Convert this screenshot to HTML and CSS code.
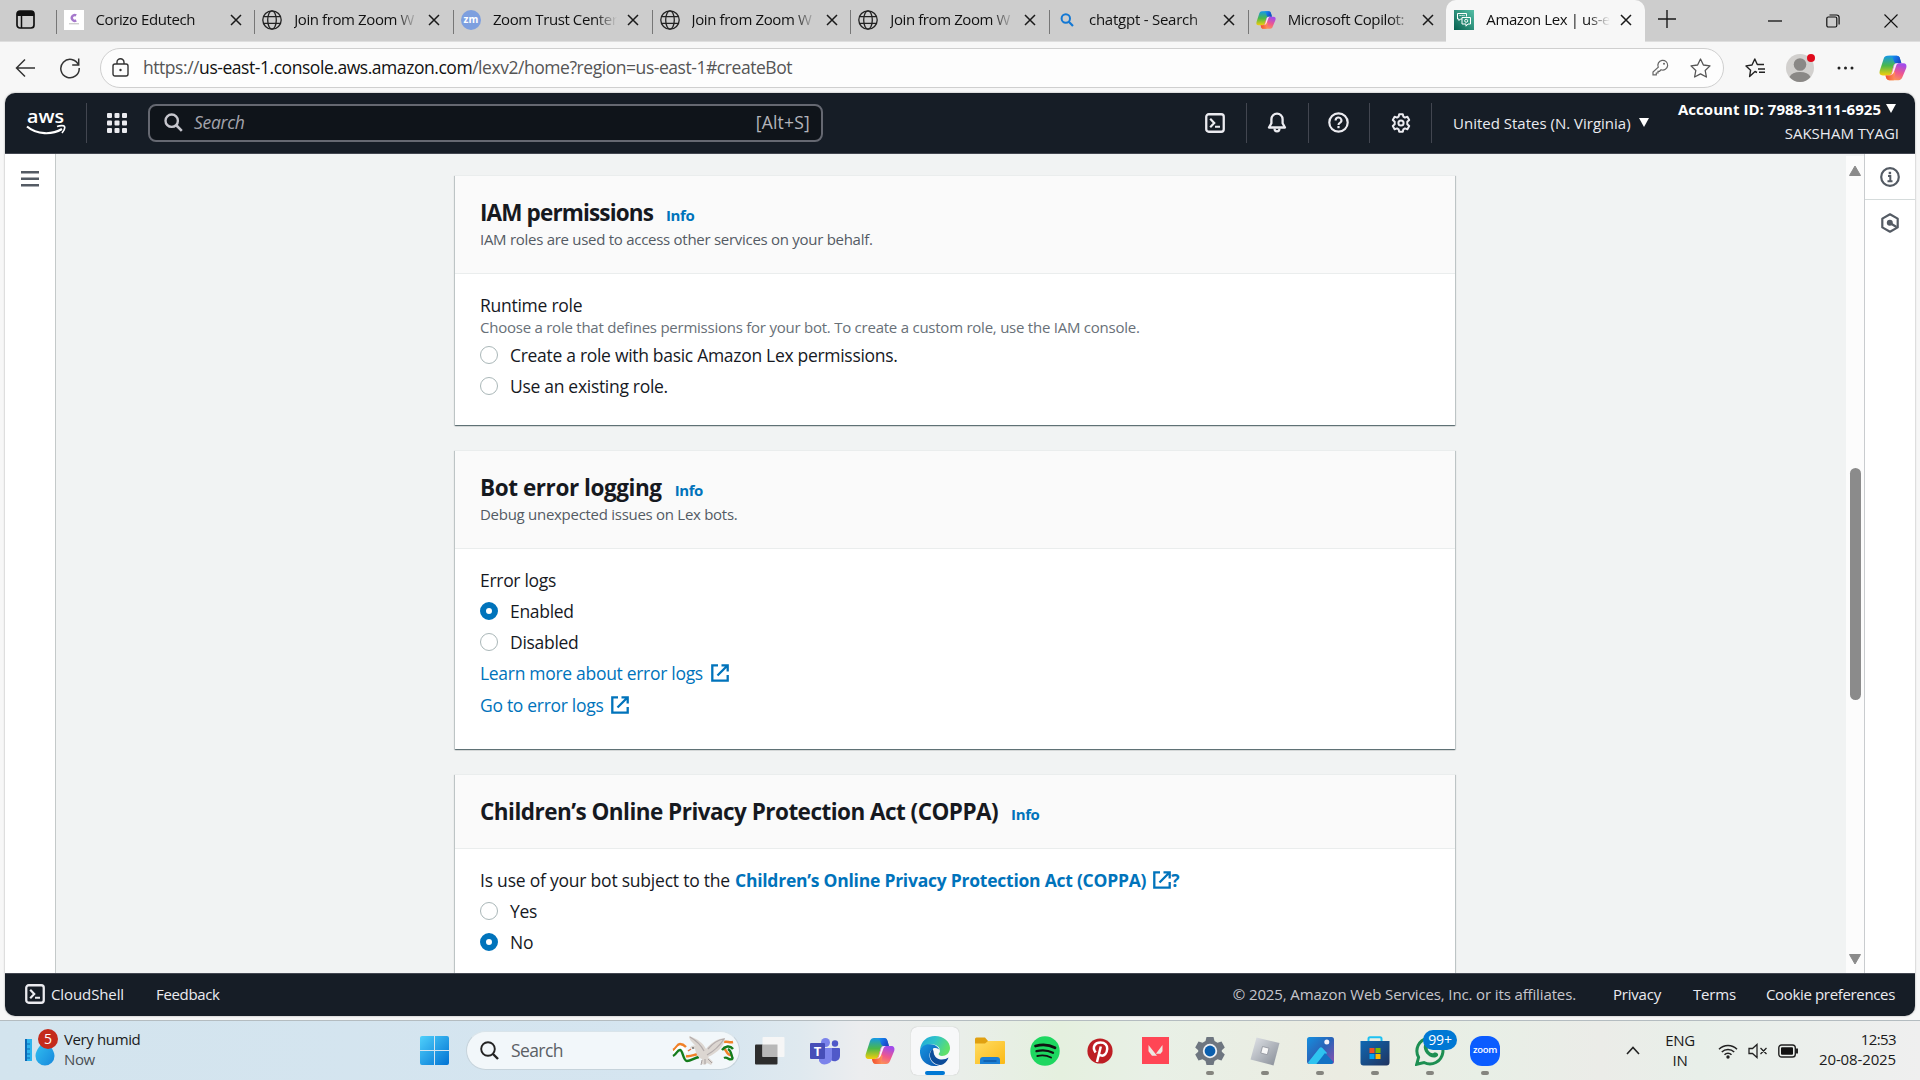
FILE: index.html
```html
<!DOCTYPE html>
<html lang="en">
<head>
<meta charset="utf-8">
<title>Amazon Lex | us-east-1</title>
<link rel="stylesheet" href="styles.css">
</head>
<body>
<svg class="sprite" width="0" height="0" aria-hidden="true">
  <defs>
    <linearGradient id="cpBlue" x1="0" y1="0" x2="1" y2=".3"><stop offset="0" stop-color="#22b6ee"/><stop offset=".55" stop-color="#1479e8"/><stop offset="1" stop-color="#1b49c9"/></linearGradient>
    <linearGradient id="cpLeft" x1="0" y1="0" x2="0" y2="1"><stop offset="0" stop-color="#1598e6"/><stop offset=".5" stop-color="#4bb84a"/><stop offset="1" stop-color="#f5ce0a"/></linearGradient>
    <linearGradient id="cpRight" x1=".6" y1="0" x2=".2" y2="1"><stop offset="0" stop-color="#a24bea"/><stop offset=".5" stop-color="#f0588c"/><stop offset="1" stop-color="#ffa04a"/></linearGradient>
    <linearGradient id="cpBottom" x1="0" y1="0" x2="1" y2="0"><stop offset="0" stop-color="#f0502d"/><stop offset="1" stop-color="#ff8f5e"/></linearGradient>
    <linearGradient id="edgeTop" x1="0" y1="0" x2="1" y2=".4"><stop offset="0" stop-color="#1fa5dc"/><stop offset=".5" stop-color="#2fc3c9"/><stop offset="1" stop-color="#5fe06a"/></linearGradient>
    <linearGradient id="edgeLow" x1="0" y1="0" x2="1" y2="1"><stop offset="0" stop-color="#1795e0"/><stop offset="1" stop-color="#0a55b0"/></linearGradient>
    <linearGradient id="winG" x1="0" y1="0" x2="1" y2="1"><stop offset="0" stop-color="#4fd0fb"/><stop offset="1" stop-color="#0072d3"/></linearGradient>
    <linearGradient id="dropG" x1="0" y1="0" x2="1" y2="1"><stop offset="0" stop-color="#35c5f2"/><stop offset="1" stop-color="#1687dc"/></linearGradient>
    <linearGradient id="folderG" x1="0" y1="0" x2="1" y2="1"><stop offset="0" stop-color="#ffdc62"/><stop offset="1" stop-color="#fbb916"/></linearGradient>
    <linearGradient id="robloxG" x1="0" y1="0" x2="1" y2="1"><stop offset="0" stop-color="#e2e5e9"/><stop offset="1" stop-color="#858b95"/></linearGradient>
    <linearGradient id="photoG" x1="0" y1="0" x2="1" y2="1"><stop offset="0" stop-color="#1590df"/><stop offset=".5" stop-color="#2a63b8"/><stop offset="1" stop-color="#8f4fae"/></linearGradient>
    <linearGradient id="storeG" x1="0" y1="0" x2="1" y2="1"><stop offset="0" stop-color="#0e68b4"/><stop offset="1" stop-color="#21345f"/></linearGradient>
    <linearGradient id="lexG" x1="0" y1="1" x2="1" y2="0"><stop offset="0" stop-color="#055f4e"/><stop offset="1" stop-color="#56c0a7"/></linearGradient>
    <symbol id="x" viewBox="0 0 12 12"><path d="M1 1l10 10M11 1L1 11" stroke="#1a1a1a" stroke-width="1.5" fill="none"/></symbol>
    <symbol id="globe" viewBox="0 0 20 20"><g fill="none" stroke="#222" stroke-width="1.3"><circle cx="10" cy="10" r="9.2"/><ellipse cx="10" cy="10" rx="4.3" ry="9.2"/><path d="M1.6 6.6h16.8M1.6 13.4h16.8"/></g></symbol>
    <symbol id="copilot" viewBox="0 0 30 28">
      <path d="M9 1h10c2 0 3 1 3.500 3l1.500 5h-5c-2 0-3 1-3.500 3l-2 7c-.7 2-2 3-4 3H4c-3 0-4-2-3.200-5L5 4c.8-2 2-3 4-3z" fill="url(#cpLeft)"/>
      <path d="M9 1h10c2 0 3 1 3.500 3l1.500 5h-5c-1.600 0-2.500-.6-3-2.200L15 4c-.5-2-2-3-6-3z" fill="url(#cpBlue)"/>
      <path d="M21 27H11c-2 0-3-1-3.500-3L7 22h3c2 0 3-1 3.500-3l2-7c.7-2 2-3 4-3H26c3 0 4 2 3.200 5L25 24c-.8 2-2 3-4 3z" fill="url(#cpRight)"/>
      <path d="M15 27h-4c-2 0-3-1-3.500-3L7 22h3c2 0 3-1 3.500-3l1-3.500 3 3.500-1.500 6c-.2 1-.3 1.600 0 2z" fill="url(#cpBottom)"/>
      <path d="M14 19l2-7c.6-2 1.600-3 3.500-3h1.500c-1.600.5-2.300 1.500-2.900 3.400L16.500 17c-.8 3-2.500 4.800-5 5 1.500-.6 2.100-1.500 2.500-3z" fill="#fff" opacity=".9"/>
    </symbol>
    <symbol id="shell" viewBox="0 0 20 20"><rect x="1.250" y="1.250" width="17.500" height="17.500" rx="2.500" fill="none" stroke="#ebebf0" stroke-width="2.300"/><path d="M5.200 5.800l4 4.200-4 4.200" fill="none" stroke="#ebebf0" stroke-width="2.200"/><path d="M10 13.800h5" stroke="#ebebf0" stroke-width="2"/></symbol>
    <symbol id="ext" viewBox="0 0 18 18"><g fill="none" stroke="#0073bb" stroke-width="2.300"><path d="M7 1.300H1.300v15.400h15.400V11"/><path d="M10.500 1.300h6.200v6.200M16.200 1.800L6.500 11.500"/></g></symbol>
  </defs>
</svg>

<div class="desktop">
  <header class="tabstrip">
    <div class="workspace"><svg width="19" height="19" viewBox="0 0 19 19"><rect x="1" y="1" width="17" height="17" rx="3" fill="none" stroke="#111" stroke-width="1.700"/><path d="M1 4a3 3 0 0 1 3-3h11a3 3 0 0 1 3 3v2H1z" fill="#111"/><path d="M5.500 6v12" stroke="#111" stroke-width="1.500"/></svg></div>
    <div class="tab"><svg class="fav" viewBox="0 0 20 20"><rect width="20" height="20" fill="#fff"/><path d="M12.200 5.400a2.900 2.900 0 1 0 0 5" fill="none" stroke="#a678cc" stroke-width="2.400"/><path d="M5 13.800h10" stroke="#bbb" stroke-width="1"/></svg><span class="tab-title">Corizo Edutech</span><svg class="close"><use href="#x"/></svg></div>
    <div class="tab"><svg class="fav"><use href="#globe"/></svg><span class="tab-title">Join from Zoom W</span><svg class="close"><use href="#x"/></svg></div>
    <div class="tab"><span class="fav zm">zm</span><span class="tab-title">Zoom Trust Center</span><svg class="close"><use href="#x"/></svg></div>
    <div class="tab"><svg class="fav"><use href="#globe"/></svg><span class="tab-title">Join from Zoom W</span><svg class="close"><use href="#x"/></svg></div>
    <div class="tab"><svg class="fav"><use href="#globe"/></svg><span class="tab-title">Join from Zoom W</span><svg class="close"><use href="#x"/></svg></div>
    <div class="tab"><svg class="fav" viewBox="0 0 20 20"><circle cx="8.800" cy="8.500" r="4.200" fill="none" stroke="#1378d4" stroke-width="2"/><path d="M11.800 11.800l4.200 4.200" stroke="#1378d4" stroke-width="2.200"/></svg><span class="tab-title chat">chatgpt - Search</span><svg class="close"><use href="#x"/></svg></div>
    <div class="tab"><svg class="fav"><use href="#copilot"/></svg><span class="tab-title">Microsoft Copilot:</span><svg class="close"><use href="#x"/></svg></div>
    <div class="tab active"><svg class="fav" viewBox="0 0 20 20"><rect width="20" height="20" fill="url(#lexG)"/><g fill="none" stroke="#fff" stroke-width="1"><path d="M8 9H6.500L5 10.500V9H3.500V3.500h9v3"/><path d="M8 7.500h8.500V14H14l-2 2.200V14H8z"/><circle cx="12.200" cy="10.800" r="1.500"/><path d="M5.500 5.500h5" stroke-dasharray="1.200 .8"/></g></svg><span class="tab-title">Amazon Lex | us-e</span><svg class="close"><use href="#x"/></svg></div>
    <svg class="newtab" width="18" height="18" viewBox="0 0 18 18"><path d="M9 0v18M0 9h18" stroke="#1a1a1a" stroke-width="1.400"/></svg>
    <div class="wincontrols">
      <svg width="14" height="14" viewBox="0 0 14 14"><path d="M0 7h14" stroke="#111" stroke-width="1.300"/></svg>
      <svg width="14" height="14" viewBox="0 0 14 14"><g fill="none" stroke="#111" stroke-width="1.200"><rect x=".8" y="3" width="10" height="10" rx="1.500"/><path d="M3.500 1h7a2.600 2.600 0 0 1 2.600 2.600v7"/></g></svg>
      <svg width="14" height="14" viewBox="0 0 14 14"><path d="M.5.5l13 13M13.500.5l-13 13" stroke="#111" stroke-width="1.100"/></svg>
    </div>
  </header>

  <div class="toolbar">
    <svg class="back" width="21" height="20" viewBox="0 0 21 20"><path d="M20 10H1.500M10 1.500L1.500 10l8.500 8.500" fill="none" stroke="#333" stroke-width="1.500"/></svg>
    <svg class="reload" width="22" height="22" viewBox="0 0 22 22"><path d="M19.500 8A9.200 9.200 0 1 0 20.200 11" fill="none" stroke="#333" stroke-width="1.500"/><path d="M19.700 1.500V8h-6.500" fill="none" stroke="#333" stroke-width="1.500"/></svg>
    <div class="address">
      <svg width="17" height="19" viewBox="0 0 17 19"><g fill="none" stroke="#333" stroke-width="1.400"><rect x="1" y="6" width="15" height="12" rx="2"/><path d="M5 6V4.200a3.500 3.500 0 0 1 7 0V6"/></g><circle cx="8.500" cy="12" r="1.200" fill="#333"/></svg>
      <span class="url">https://<b>us-east-1.console.aws.amazon.com</b>/lexv2/home?region=us-east-1#createBot</span>
      <svg class="key" width="17" height="17" viewBox="0 0 17 17"><path d="M6.300 8.200a4.900 4.900 0 1 1 2.800 2.600L7.500 12.300H6v1.700H4.300v1.900H1v-2.800z" fill="none" stroke="#666" stroke-width="1.200"/><circle cx="12" cy="4.800" r="1" fill="#666"/></svg>
      <svg width="21" height="20" viewBox="0 0 21 20"><path d="M10.500 1l2.900 6 6.600.9-4.800 4.600 1.200 6.500-5.900-3.100L4.600 19l1.200-6.500L1 7.900 7.600 7z" fill="none" stroke="#555" stroke-width="1.300" stroke-linejoin="round"/></svg>
    </div>
    <svg class="favs" width="21" height="20" viewBox="0 0 21 20"><path d="M12 14.500l-2-1L4.600 18.500l1-6.300L1 7.900l6-.9 2.800-6 2.500 5.500H19M13 11h7M14 14.200h6" fill="none" stroke="#222" stroke-width="1.400" stroke-linejoin="round"/></svg>
    <span class="avatar"><svg width="28" height="28" viewBox="0 0 28 28"><circle cx="14" cy="14" r="14" fill="#d2d0ce"/><circle cx="14" cy="10.500" r="6.300" fill="#8a8886"/><path d="M3.500 23a11 7 0 0 1 21 0A14 14 0 0 1 14 28 14 14 0 0 1 3.500 23z" fill="#8a8886"/></svg><i class="dot"></i></span>
    <svg class="more" width="17" height="4" viewBox="0 0 17 4"><g fill="#222"><circle cx="2" cy="2" r="1.500"/><circle cx="8.500" cy="2" r="1.500"/><circle cx="15" cy="2" r="1.500"/></g></svg>
    <svg class="cp" width="28" height="28"><use href="#copilot"/></svg>
  </div>

  <div class="page">
    <nav class="awsnav">
      <svg class="logo" width="40" height="26" viewBox="0 0 40 26"><text x="1" y="13" textLength="37" lengthAdjust="spacingAndGlyphs" class="logo-text">aws</text><path d="M1 16.500c10 8.500 25 8.500 35 2.500" fill="none" stroke="#fff" stroke-width="2.200"/><path d="M31 16.500c3-1 7-1.200 7.500 0s-.8 4.500-2.500 6.500" fill="none" stroke="#fff" stroke-width="1.700"/></svg>
      <i class="vr"></i>
      <svg class="apps" width="20" height="20" viewBox="0 0 20 20"><g fill="#ebebf0"><rect width="5" height="5" rx="1"/><rect x="7.500" width="5" height="5" rx="1"/><rect x="15" width="5" height="5" rx="1"/><rect y="7.500" width="5" height="5" rx="1"/><rect x="7.500" y="7.500" width="5" height="5" rx="1"/><rect x="15" y="7.500" width="5" height="5" rx="1"/><rect y="15" width="5" height="5" rx="1"/><rect x="7.500" y="15" width="5" height="5" rx="1"/><rect x="15" y="15" width="5" height="5" rx="1"/></g></svg>
      <div class="search"><svg width="19" height="19" viewBox="0 0 19 19"><circle cx="7.700" cy="7.700" r="6.200" fill="none" stroke="#c6c6cd" stroke-width="2.400"/><path d="M12 12l5.800 5.800" stroke="#c6c6cd" stroke-width="2.600"/></svg><span class="ph">Search</span><span class="kbd">[Alt+S]</span></div>
      <div class="navicons">
        <span><svg width="20" height="20"><use href="#shell"/></svg></span>
        <span><svg width="20" height="21" viewBox="0 0 20 21"><path d="M10 1.600a5.600 5.600 0 0 0-5.600 5.600v4L2 15.500h16l-2.400-4.300v-4A5.600 5.600 0 0 0 10 1.600z" fill="none" stroke="#ebebf0" stroke-width="2.300" stroke-linejoin="round"/><path d="M7.500 16.500a2.500 2.800 0 0 0 5 0" fill="none" stroke="#ebebf0" stroke-width="2.200"/></svg></span>
        <span><svg width="21" height="21" viewBox="0 0 21 21"><circle cx="10.500" cy="10.500" r="9.200" fill="none" stroke="#ebebf0" stroke-width="2.200"/><path d="M7.600 8.400a2.900 2.900 0 1 1 4.300 2.500c-1 .6-1.400 1-1.400 2.100" fill="none" stroke="#ebebf0" stroke-width="2.100"/><rect x="9.400" y="14" width="2.200" height="2.200" fill="#ebebf0"/></svg></span>
        <span><svg width="20" height="20" viewBox="0 0 20 20"><path d="M8.200 1.200h3.600l.6 2.500 1.500.9 2.500-.8 1.800 3.100-1.900 1.800v2.600l1.900 1.800-1.800 3.100-2.500-.8-1.500.9-.6 2.500H8.200l-.6-2.500-1.500-.9-2.500.8-1.800-3.100 1.900-1.800V8.700L1.800 6.900l1.800-3.100 2.500.8 1.500-.9z" fill="none" stroke="#ebebf0" stroke-width="2" stroke-linejoin="round"/><circle cx="10" cy="10" r="2.600" fill="none" stroke="#ebebf0" stroke-width="2"/></svg></span>
      </div>
      <div class="region"><span>United States (N. Virginia)</span><i class="caret"></i></div>
      <div class="account"><div class="acct-id"><b>Account ID: 7988-3111-6925</b><i class="caret"></i></div><div class="acct-name">SAKSHAM TYAGI</div></div>
    </nav>

    <div class="work">
      <aside class="rail left"><svg width="18" height="16" viewBox="0 0 18 16"><path d="M0 1.300h18M0 7.800h18M0 14.300h18" stroke="#545b64" stroke-width="2.400"/></svg></aside>
      <main class="content">
        <section class="card">
          <div class="card-head"><h2><span class="h-iam">IAM permissions</span><a class="info">Info</a></h2><p>IAM roles are used to access other services on your behalf.</p></div>
          <div class="card-body">
            <div class="label">Runtime role</div>
            <div class="hint">Choose a role that defines permissions for your bot. To create a custom role, use the IAM console.</div>
            <div class="row"><i class="radio"></i><span>Create a role with basic Amazon Lex permissions.</span></div>
            <div class="row"><i class="radio"></i><span>Use an existing role.</span></div>
          </div>
        </section>
        <section class="card">
          <div class="card-head"><h2><span class="h-bot">Bot error logging</span><a class="info">Info</a></h2><p>Debug unexpected issues on Lex bots.</p></div>
          <div class="card-body logs">
            <div class="row">Error logs</div>
            <div class="row"><i class="radio on"></i><span>Enabled</span></div>
            <div class="row"><i class="radio"></i><span>Disabled</span></div>
            <a class="row link">Learn more about error logs<svg width="18" height="18"><use href="#ext"/></svg></a>
            <a class="row link">Go to error logs<svg width="18" height="18"><use href="#ext"/></svg></a>
          </div>
        </section>
        <section class="card">
          <div class="card-head short"><h2><span class="h-coppa">Children’s Online Privacy Protection Act (COPPA)</span><a class="info">Info</a></h2></div>
          <div class="card-body logs">
            <div class="row question"><span class="q">Is use of your bot subject to the</span><a class="qlink">Children’s Online Privacy Protection Act (COPPA)</a><svg width="18" height="18"><use href="#ext"/></svg><b class="qm">?</b></div>
            <div class="row"><i class="radio"></i><span>Yes</span></div>
            <div class="row"><i class="radio on"></i><span>No</span></div>
          </div>
        </section>
      </main>
      <div class="scrollbar"><svg width="12" height="11" viewBox="0 0 12 11"><path d="M6 1l5.500 9.500H.5z" fill="#8b8b8b" stroke="#8b8b8b" stroke-linejoin="round"/></svg><i class="thumb"></i><svg width="12" height="11" viewBox="0 0 12 11"><path d="M6 10L11.500.5H.5z" fill="#8b8b8b" stroke="#8b8b8b" stroke-linejoin="round"/></svg></div>
      <aside class="rail right">
        <span><svg width="20" height="20" viewBox="0 0 20 20"><circle cx="10" cy="10" r="8.800" fill="none" stroke="#545b64" stroke-width="2.200"/><path d="M8 9h2.300v5M7.500 14.200h5" fill="none" stroke="#545b64" stroke-width="2"/><rect x="8.700" y="4.800" width="2.400" height="2.400" fill="#545b64"/></svg></span>
        <span><svg width="20" height="20" viewBox="0 0 20 20"><path d="M10 1.300l7.700 4.300v8.800L10 18.700l-7.700-4.300V5.600z" fill="none" stroke="#545b64" stroke-width="2.200" stroke-linejoin="round"/><circle cx="9.800" cy="9.800" r="3" fill="#545b64"/><path d="M10 10l6.500 4" stroke="#545b64" stroke-width="2.200"/></svg></span>
      </aside>
    </div>

    <footer class="awsfoot">
      <svg width="20" height="20"><use href="#shell"/></svg><span class="f1">CloudShell</span><span class="f2">Feedback</span>
      <span class="copy">© 2025, Amazon Web Services, Inc. or its affiliates.</span><span class="f3">Privacy</span><span class="f3">Terms</span><span class="f4">Cookie preferences</span>
    </footer>
  </div>

  <div class="taskbar">
    <div class="widgets">
      <div class="weather"><svg width="33" height="32" viewBox="0 0 33 32"><rect x="0" y="0" width="7" height="22" fill="#2cb4ee"/><rect width="2" height="22" fill="#0d69b5"/><path d="M2 5h3M2 10h3M2 15h3M2 19h3" stroke="#0d69b5" stroke-width="1"/><path d="M20 0c4 6 9.500 11 9.500 17a9.500 9.500 0 0 1-19 0C10.500 11 16 6 20 0z" fill="url(#dropG)"/></svg><span class="wbadge">5</span></div>
      <div class="wtext"><span>Very humid</span><span class="now">Now</span></div>
    </div>
    <svg class="start" width="29" height="29" viewBox="0 0 29 29"><g fill="url(#winG)"><path d="M2 0h12v14H0V2a2 2 0 0 1 2-2zM15 0h12a2 2 0 0 1 2 2v12H15zM0 15h14v14H2a2 2 0 0 1-2-2zM15 15h14v12a2 2 0 0 1-2 2H15z"/></g></svg>
    <div class="tsearch"><svg width="19" height="19" viewBox="0 0 19 19"><circle cx="8" cy="8" r="6.800" fill="none" stroke="#222" stroke-width="1.900"/><path d="M13 13l5 5" stroke="#222" stroke-width="2.400"/></svg><span>Search</span>
      <svg class="dove" width="63" height="30" viewBox="0 0 63 30"><g fill="none" stroke-width="2.400"><path d="M1 14c3-1 4-6 7-6s4 1 6 3" stroke="#f08128"/><path d="M1 17c4-2 4-6 7-6s5 4 7 6" stroke="#fff"/><path d="M1 20c4-2 4-6 7-6s3 11 7 11 7-3 12-4" stroke="#147c1c"/><path d="M14 20c4 1 7-1 12-2" stroke="#f08128"/><path d="M52 6c4-1 5 1 9 0M51 12c3 0 4 8 8 7" stroke="#f08128"/><path d="M52 9c4-1 5 1 8 1" stroke="#fff"/><path d="M50 14c3-4 8-5 11-1M52 22c4-2 4 3 9 1M56 13c4 2 3 7 5 10" stroke="#147c1c"/></g><path d="M18 12c2-3 5-3 7-1C21 7 17 4 17 0c9 3 14 7 17 13 5-6 10-10 19-11-1 9-8 15-17 19l5 5-2 3-4-2-2 2-3-1v-5c-5-2-6-6-7-10z" fill="#dcd6d1"/><path d="M18 1c7 4 11 8 14 14M36 13c5-6 9-9 16-10-5 8-10 12-17 16" fill="none" stroke="#b3acac" stroke-width="1.200"/><path d="M30 24l-1 5M33 23v5M36 23l4 4" stroke="#a7a0a0"/><circle cx="21" cy="12" r=".8" fill="#222"/><path d="M16 15l3-2" stroke="#e37446" stroke-width="1.500"/></svg>
    </div>
    <div class="apps-row">
      <span class="app"><svg width="30" height="30" viewBox="0 0 30 30"><rect x="0" y="8.500" width="22.500" height="20" rx="1" fill="#2d2d2d"/><rect x="7.500" y="1" width="22" height="20" rx="1" fill="#f6f6f6"/><path d="M7.500 8.500h15V21h-15z" fill="#b8b8b8"/></svg></span>
      <span class="app"><svg width="30" height="30" viewBox="0 0 30 30"><circle cx="15.500" cy="6.500" r="4.500" fill="#7b83eb"/><circle cx="25" cy="7.500" r="3.200" fill="#5059c9"/><path d="M21 12h8a1 1 0 0 1 1 1v7a5.500 5.500 0 0 1-9 4z" fill="#5059c9"/><path d="M9 12h13v9a7 7 0 0 1-13 4z" fill="#7b83eb"/><rect y="7" width="15" height="16" rx="1" fill="#464eb8"/><text x="7.500" y="19.500" text-anchor="middle" class="teams-t">T</text></svg></span>
      <span class="app"><svg width="30" height="28"><use href="#copilot"/></svg></span>
      <span class="app current"><svg width="30" height="30" viewBox="0 0 30 30"><path d="M0 14C1 5 7 0 15 0c9 0 15 6 15 12 0 5-4 8-8 8-3 0-4-1.500-3.500-2.500 1-1 1.300-2 1.300-3.500 0-4-5-6-9-5.500C5 9 1.500 11 0 14z" fill="url(#edgeTop)"/><path d="M0 14c2-4.500 6-6 10-5.800 5 0 9 3 9.500 6.300C17 11 10 12 9.500 19c-.3 5 4 10 10 10.500C10 32-1 26 0 14z" fill="url(#edgeLow)"/><path d="M12.500 13C9 16 9 22 13 26c3 3 8 4 10.500 2 3-2 4.500-4.500 5-6.500-4 3-13 3-14-3-.5-2.500-.5-4-2-5.500z" fill="#0c4c9a"/><path d="M13 12.500c2.500-1 6 0 6.800 2.500-.2 1.500-.8 2.200-1.500 3 .5 1.700 2.200 2 3.700 2-3.500 1.500-7 .5-8-2-.7-2 0-3.500-1-5.500z" fill="#f8f8f8"/></svg></span>
      <span class="app"><svg width="30" height="30" viewBox="0 0 30 30"><path d="M0 3a1.500 1.500 0 0 1 1.500-1.500H10L13 5v3H0z" fill="#e0a010"/><path d="M0 7.500h10L13 5h16a1 1 0 0 1 1 1v21a1 1 0 0 1-1 1H0z" fill="url(#folderG)"/><path d="M5 28v-4a3 3 0 0 1 3-3h14a3 3 0 0 1 3 3v4z" fill="#1b7fd4"/><path d="M8.500 25h13" stroke="#0b4f9a" stroke-width="1.200"/></svg></span>
      <span class="app"><svg width="30" height="30" viewBox="0 0 30 30"><circle cx="15" cy="15" r="14.700" fill="#1ed760"/><g fill="none" stroke="#111" stroke-linecap="round"><path d="M5.500 10c7-2 14-1.200 19.500 1.800" stroke-width="2.700"/><path d="M6.500 15.200c6-1.600 11.500-1 16.500 1.600" stroke-width="2.300"/><path d="M7.300 20c5-1.200 9.500-.7 13.700 1.500" stroke-width="1.900"/></g></svg></span>
      <span class="app"><svg width="26" height="26" viewBox="0 0 26 26"><circle cx="13" cy="13" r="12.600" fill="#bd1e24"/><path d="M8.600 14.500C4.500 8.500 8.500 4.500 13.500 4.500c4.500 0 7 2.800 6.700 6.500-.3 4.500-3 7-5.700 6.600-1.700-.2-2.500-1.200-2.500-1.200M13.800 8.500l-3.800 15.500" fill="none" stroke="#fff" stroke-width="2.500"/></svg></span>
      <span class="app"><svg width="27" height="27" viewBox="0 0 27 27"><rect width="27" height="27" fill="#ff4655"/><path d="M6.500 8l8.500 10.800h-5L6.500 14.300zM20.500 8v6.300l-2 2.400h-4.600z" fill="#ece8e1"/></svg></span>
      <span class="app run"><svg width="30" height="30" viewBox="0 0 30 30"><path d="M11.500 1h7l1 4 3 1.700 4-1.200 3.300 6-3 2.800v1.400l3 2.800-3.300 6-4-1.200-3 1.700-1 4h-7l-1-4-3-1.700-4 1.200-3.300-6 3-2.800v-1.400l-3-2.800 3.300-6 4 1.200 3-1.700z" fill="#6e7680"/><circle cx="15" cy="15" r="7.200" fill="#eef1f4"/><circle cx="15" cy="15" r="5.400" fill="#0b5fae"/></svg></span>
      <span class="app run"><svg width="30" height="30" viewBox="0 0 30 30"><path d="M6.500 1.500L29.500 7l-6 22.500L.5 23.500z" fill="url(#robloxG)"/><path d="M12.500 10.500l6.500 1.700-1.700 6.500-6.500-1.700z" fill="#f7f7f7" stroke="#8d9199" stroke-width=".8"/></svg></span>
      <span class="app run"><svg width="27" height="27" viewBox="0 0 27 27"><rect width="27" height="27" rx="2.500" fill="url(#photoG)"/><path d="M1 25.500L12.500 11q1.500-1.700 3 0L20 16 9.500 27H2.500z" fill="#2ec3f0"/><path d="M9.500 27l8.500-11 8.500 9q-.8 2-2.500 2z" fill="#1372c4"/><circle cx="19.800" cy="5" r="2.500" fill="#f7f3fa"/></svg></span>
      <span class="app run"><svg width="30" height="30" viewBox="0 0 30 30"><path d="M8.500 7V2.800c0-1 .5-1.500 1.500-1.500h10c1 0 1.500.5 1.500 1.500V7" fill="none" stroke="#1ec1f2" stroke-width="2"/><path d="M.5 5h29v21.500a3 3 0 0 1-3 3h-23a3 3 0 0 1-3-3z" fill="url(#storeG)"/><path d="M9.500 12h5v5h-5z" fill="#f25022"/><path d="M15.500 12h5v5h-5z" fill="#7fba00"/><path d="M9.500 18h5v5h-5z" fill="#00a4ef"/><path d="M15.500 18h5v5h-5z" fill="#ffb900"/></svg></span>
      <span class="app run"><svg width="30" height="30" viewBox="0 0 30 30"><path d="M1.700 28.300l1.900-7A13 13 0 1 1 9 26.500z" fill="none" stroke="#1d8f52" stroke-width="3"/><path d="M9 9c3-4 5 1 4 3-1.500 1.500 3.500 6.500 5.500 5 1.500-1.500 6.500.5 4 3.300C17 25 7 16 9 9z" fill="#1d8f52"/></svg><span class="wa-badge">99+</span></span>
      <span class="app run"><span class="zoom">zoom</span></span>
    </div>
    <div class="tray">
      <svg class="chev" width="14" height="9" viewBox="0 0 14 9"><path d="M1 8l6-6.500L13 8" fill="none" stroke="#222" stroke-width="1.600"/></svg>
      <div class="lang"><span>ENG</span><span>IN</span></div>
      <svg class="wifi" width="20" height="16" viewBox="0 0 20 16"><g fill="none" stroke="#222" stroke-width="1.500"><path d="M1 6.200a12.700 12.700 0 0 1 18 0M3.800 9a8.700 8.700 0 0 1 12.400 0M6.500 11.800a4.900 4.900 0 0 1 7 0"/></g><circle cx="10" cy="14" r="1.700" fill="#222"/></svg>
      <svg class="vol" width="20" height="16" viewBox="0 0 20 16"><path d="M1 5.500h3.500L9 1.500v13l-4.500-4H1zM12.500 5l6 6M18.500 5l-6 6" fill="none" stroke="#222" stroke-width="1.300"/></svg>
      <svg class="bat" width="21" height="14" viewBox="0 0 21 14"><rect x=".8" y="1" width="16.500" height="12" rx="2.800" fill="none" stroke="#222" stroke-width="1.400"/><rect x="3" y="3.300" width="12" height="7.500" rx="1" fill="#111"/><path d="M19 4.500v5" stroke="#222" stroke-width="2"/></svg>
      <div class="clock"><span class="t">12:53</span><span class="d">20-08-2025</span></div>
    </div>
  </div>
</div>
</body>
</html>
```

FILE: styles.css
```css
* { box-sizing: border-box; }
body { margin: 0; font-family: "Open Sans", sans-serif; background: #f7f7f7; }
svg { display: block; flex: none; }
.sprite { position: absolute; }
i { font-style: normal; }
.desktop { width: 1920px; height: 1080px; display: flex; flex-direction: column; overflow: hidden; white-space: nowrap; }

/* Browser tabs */
.tabstrip { height: 42px; flex: none; background: #cdcdcd; display: flex; align-items: center; padding-left: 16px; border-bottom: 1px solid #dedede; }
.workspace { width: 39.500px; flex: none; padding-bottom: 2px; }
.tab { width: 198.700px; height: 41px; padding: 0 0 2px 8px; display: flex; align-items: center; flex: none; background: linear-gradient(#777, #777) 0 10px / 1px 24px no-repeat; }
.tab.active { background: #f7f7f7; border-radius: 10px 10px 0 0; height: 42px; align-self: flex-start; padding-bottom: 3px; }
.fav { width: 20px; height: 20px; flex: none; }
.zm { border-radius: 50%; background: #7d9fdf; color: #fff; font: 700 10px/19px "Open Sans", sans-serif; text-align: center; }
.tab-title { margin-left: 12px; padding-bottom: 1px; width: 124px; font-size: 15px; letter-spacing: -.4px; color: #111; -webkit-mask-image: linear-gradient(90deg, #000 102px, transparent 124px); mask-image: linear-gradient(90deg, #000 102px, transparent 124px); }
.chat { letter-spacing: -.24px; }
.close { width: 12px; height: 12px; margin: 0 0 0 10px; }
.newtab { margin: -3px 0 0 13px; }
.wincontrols { margin-left: auto; padding-right: 22px; display: flex; gap: 44px; }

/* Address bar */
.toolbar { height: 51px; flex: none; display: flex; align-items: center; padding: 0 13px 0 15px; background: #f7f7f7; }
.reload { margin-left: 23px; }
.address { margin-left: 19px; width: 1624px; height: 40px; border: 1px solid #cfcfcf; border-radius: 20px; background: #fdfdfd; display: flex; align-items: center; padding: 0 12px 0 11px; }
.url { margin-left: 14px; padding-bottom: 2px; font-size: 17.5px; letter-spacing: -.45px; color: #555; }
.url b { font-weight: 400; color: #111; }
.key { margin: 0 21px 0 auto; }
.favs { margin-left: 21px; }
.avatar { margin-left: 20px; position: relative; }
.dot { position: absolute; right: -1px; top: 0; width: 8px; height: 8px; border-radius: 50%; background: #e00b1c; }
.more { margin-left: 23px; }
.cp { margin-left: auto; }

/* Console frame */
.page { margin: 0 5px; height: 923px; flex: none; border-radius: 10px; overflow: hidden; display: flex; flex-direction: column; box-shadow: 0 0 2px #999; }
.awsnav { height: 61px; flex: none; background: #161d26; border-bottom: 1px solid #424650; display: flex; align-items: center; color: #ebebf0; font-size: 15px; padding: 0 16px 1px 21px; }
.logo-text { font: 600 18.500px "Open Sans", sans-serif; fill: #fff; }
.vr { width: 1px; height: 40px; background: #424650; margin: 0 20px 0 20px; }
.search { margin-left: 21px; width: 675px; height: 38px; border: 2px solid #656871; border-radius: 8px; background: #0f141a; display: flex; align-items: center; padding: 0 11px 1px 14px; font-size: 17.5px; color: #a4a4ad; }
.ph { font-style: italic; margin-left: 11px; letter-spacing: -.3px; }
.kbd { margin-left: auto; letter-spacing: .2px; color: #b4b4bb; }
.navicons { margin-left: auto; display: flex; }
.navicons span { width: 61.700px; height: 40px; display: flex; align-items: center; justify-content: center; border-right: 1px solid #424650; }
.navicons span:first-child { justify-content: flex-end; padding-right: 21px; }
.region { width: 196px; margin-left: 21px; display: flex; justify-content: space-between; align-items: center; }
.caret { width: 0; border: 5px solid transparent; border-top: 9px solid #fff; border-bottom: 0; }
.account { margin-left: 29px; display: flex; flex-direction: column; align-items: flex-end; width: 221px; padding-bottom: 4px; }
.acct-id { display: flex; gap: 5px; align-items: center; color: #fff; height: 24px; padding-right: 3px; letter-spacing: .04px; }
.acct-name { height: 24px; line-height: 24px; }

.work { height: 819px; flex: none; display: flex; background: #f1f3f3; }
.rail { background: #fff; flex: none; }
.left { width: 51px; border-right: 1px solid #c4c9c9; padding: 17px 0 0 16px; }
.right { width: 51px; border-left: 1px solid #c9cccf; }
.right span { height: 46px; display: flex; align-items: center; justify-content: center; border-bottom: 1px solid #d5dbdb; }
.right span + span { border: 0; }
.content { flex: 1; height: 819px; overflow: hidden; display: flex; flex-direction: column; align-items: center; padding: 21px 0 0 8px; gap: 25px; }
.scrollbar { width: 18px; background: #fcfcfc; margin-top: 2px; display: flex; flex-direction: column; align-items: center; justify-content: space-between; padding: 9px 0 8px; flex: none; }
.thumb { width: 11px; height: 232px; border-radius: 6px; background: #8b8b8b; margin-bottom: -38px; }

/* Form cards */
.card { width: 1000px; flex: none; background: #fff; color: #16191f; font-size: 17.5px; letter-spacing: -.3px; box-shadow: 0 1px 1px 0 rgba(0,28,36,.45), 1px 1px 1px 0 rgba(0,28,36,.15), -1px 1px 1px 0 rgba(0,28,36,.15); border-top: 1px solid #eaeded; }
.card-head { height: 98px; background: #fafafa; border-bottom: 1px solid #eaeded; padding: 21px 25px 0; }
.card-head.short { height: 74px; }
h2 { margin: 0; font-size: 22.500px; line-height: 31px; display: flex; align-items: baseline; font-weight: 700; }
.h-iam { letter-spacing: -.86px; }
.h-bot { letter-spacing: -.43px; }
.h-coppa { letter-spacing: -.53px; }
.info { margin-left: 13px; font-size: 15px; font-weight: 700; color: #0073bb; letter-spacing: -.4px; }
.card-head p { margin: -3px 0 0; font-size: 15px; line-height: 22px; color: #545b64; letter-spacing: -.28px; }
.card-body { padding: 20px 25px 0; height: 151px; }
.label { height: 23px; line-height: 23px; letter-spacing: -.26px; }
.hint { font-size: 15px; line-height: 20px; color: #687078; letter-spacing: -.24px; margin-bottom: 2px; }
.row { height: 31.250px; display: flex; align-items: center; }
.logs { padding-top: 15px; height: 200px; }
.radio { width: 18px; height: 18px; border: 1.250px solid #aab7b8; border-radius: 50%; margin-right: 12px; flex: none; background: #fff; }
.radio.on { border: 6px solid #0073bb; }
.link { color: #0073bb; letter-spacing: -.3px; }
.row svg { margin-left: 8px; }
.q { letter-spacing: -.22px; margin-right: 5px; }
.qlink { color: #0073bb; font-weight: 700; letter-spacing: -.24px; }
.row .qlink + svg { margin-left: 7px; }
.qm { color: #0073bb; }

.awsfoot { height: 43px; flex: none; background: #161d26; border-top: 1px solid #424650; display: flex; align-items: center; color: #ebebf0; font-size: 15px; padding: 0 20px 2px 20px; letter-spacing: -.2px; }
.f1 { margin-left: 6px; letter-spacing: -.1px; }
.f2 { margin-left: 32px; letter-spacing: -.35px; }
.copy { margin-left: auto; color: #c6c6cd; letter-spacing: -.13px; }
.f3 { margin-left: 37px; }
.f3 + .f3 { margin-left: 32px; }
.f4 { margin-left: 30px; letter-spacing: -.34px; }

/* Taskbar */
.taskbar { height: 60px; margin-top: 4px; flex: none; border-top: 1px solid #b4bcc0; display: flex; align-items: center; background: linear-gradient(90deg, #d3e4ee 0, #d5e5f0 700px, #dfe9ef 800px, #ecedef 860px, #e9eee9 960px, #e5f0df 1060px, #e8f0e6 1150px, #ebece2 1340px, #e8efe6 1480px, #ebece8 1600px, #e8efe9 1700px, #efefef 1920px); color: #1b1b1b; font-size: 15px; }
.widgets { width: 420px; display: flex; padding-left: 25px; flex: none; }
.weather { width: 39px; height: 40px; position: relative; padding-top: 8px; }
.wbadge { position: absolute; left: 13px; top: -2px; width: 20px; height: 20px; border-radius: 50%; background: #c42b1c; color: #fff; font-size: 14px; line-height: 20px; text-align: center; }
.wtext { display: flex; flex-direction: column; line-height: 20px; letter-spacing: -.38px; margin-top: -2px; }
.now { color: #4a4f54; }
.tsearch { margin-left: 17px; width: 274px; height: 39px; border-radius: 20px; background: #f2f7fa; border: 1px solid #c6d3db; border-top-color: #d9e4ea; display: flex; align-items: center; padding: 0 4px 0 13px; font-size: 17.5px; color: #5b6065; letter-spacing: -.6px; }
.tsearch span { margin-left: 12px; padding-bottom: 1px; }
.dove { margin-left: auto; }
.apps-row { margin-left: 6px; display: flex; flex: none; }
.app { width: 48px; height: 48px; margin-right: 7px; display: flex; align-items: center; justify-content: center; position: relative; border-radius: 6px; flex: none; }
.app.current { background: #f7f8f9; box-shadow: 0 0 1px #aaa; }
.app.current::after { content: ""; position: absolute; left: 14px; bottom: 0; width: 20px; height: 4px; border-radius: 2px; background: #0078d4; }
.app.run::after { content: ""; position: absolute; left: 20px; bottom: 0; width: 8px; height: 4px; border-radius: 2px; background: #85857f; }
.teams-t { font: 700 13px "Open Sans", sans-serif; fill: #fff; }
.wa-badge { position: absolute; left: 17px; top: 3px; width: 34px; height: 20px; border-radius: 10px; background: #0078d4; color: #fff; font-size: 14px; line-height: 19px; text-align: center; letter-spacing: -.2px; }
.zoom { width: 30px; height: 30px; border-radius: 12px; background: #0b5cff; color: #fff; font: 600 9.500px/27px "Open Sans", sans-serif; text-align: center; letter-spacing: -.3px; }
.tray { margin-left: auto; display: flex; align-items: center; padding-right: 24px; }
.lang { margin: -2px 0 0 24px; width: 32px; display: flex; flex-direction: column; align-items: center; line-height: 20px; letter-spacing: -.3px; }
.wifi { margin-left: 22px; }
.vol { margin-left: 10px; }
.bat { margin-left: 10px; }
.clock { margin: -4px 0 0 19px; width: 78px; display: flex; flex-direction: column; align-items: flex-end; line-height: 20px; }
.t { letter-spacing: -.6px; }
.d { letter-spacing: -.13px; }
```
